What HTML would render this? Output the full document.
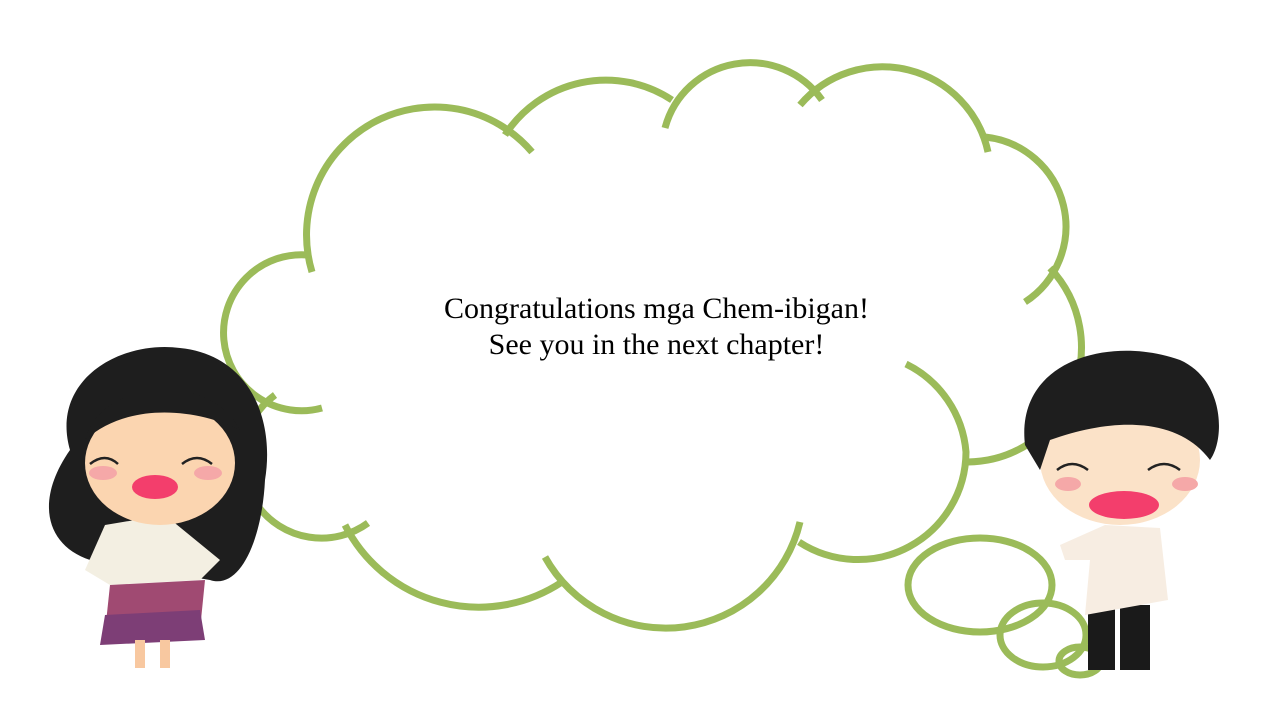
<!DOCTYPE html>
<html><head><meta charset="utf-8"><style>
html,body{margin:0;padding:0;background:#fff;width:1280px;height:720px;overflow:hidden}
.t{position:absolute;left:0;width:1313px;top:291px;text-align:center;font-family:"Liberation Serif",serif;font-size:30px;line-height:36px;color:#000}
svg{position:absolute;left:0;top:0}
</style></head><body>
<svg width="1280" height="720" viewBox="0 0 1280 720">
<g fill="none" stroke="#9BBB59" stroke-width="7" stroke-linecap="butt">
<path d="M312,272 A128,128 0 0 1 532,152"/>
<path d="M505,135 A120,120 0 0 1 672,100"/>
<path d="M665,128 A88,88 0 0 1 822,100"/>
<path d="M800,105 A108,108 0 0 1 988,152"/>
<path d="M985,137 A90,90 0 0 1 1025,302"/>
<path d="M1050,268 A115,115 0 0 1 968,462"/>
<path d="M906,364 A108,108 0 0 1 966,452 A108,108 0 0 1 799,542"/>
<path d="M800,522 A138,138 0 0 1 545,557"/>
<path d="M562,582 A150,150 0 0 1 345,525"/>
<path d="M368,523 A75,75 0 0 1 275,395"/>
<path d="M322,408 A78,78 0 1 1 308,255"/>
<ellipse cx="980" cy="585" rx="72" ry="47"/>
<ellipse cx="1043" cy="635" rx="43" ry="32"/>
<ellipse cx="1080" cy="661" rx="21" ry="14"/>
</g>
<g>
<path d="M70,450 C50,380 120,340 180,348 C250,355 275,420 265,480 C262,540 240,590 210,580 L90,560 C45,545 35,500 70,450Z" fill="#1e1e1e"/>
<path d="M85,570 L105,525 L165,515 L220,560 L200,580 L110,585Z" fill="#f3efe2"/>
<path d="M110,585 L205,580 L200,630 L105,632Z" fill="#a04a72"/>
<path d="M105,615 L200,610 L205,640 L100,645Z" fill="#7d3e76"/>
<rect x="135" y="640" width="10" height="28" fill="#f8c8a0"/><rect x="160" y="640" width="10" height="28" fill="#f8c8a0"/>
<ellipse cx="160" cy="463" rx="75" ry="62" fill="#fbd5b0"/>
<path d="M85,440 C100,380 210,370 240,430 C200,410 130,400 85,440Z" fill="#1e1e1e"/>
<ellipse cx="155" cy="487" rx="23" ry="12" fill="#f33e6c"/>
<ellipse cx="103" cy="473" rx="14" ry="7" fill="#f5a8a8"/><ellipse cx="208" cy="473" rx="14" ry="7" fill="#f5a8a8"/>
<path d="M90,464 Q105,452 118,464 M182,464 Q197,452 212,464" stroke="#222" stroke-width="2.5" fill="none"/>
</g>
<g>
<rect x="1088" y="605" width="27" height="65" fill="#1a1a1a"/><rect x="1120" y="605" width="30" height="65" fill="#1a1a1a"/>
<path d="M1060,545 L1105,525 L1160,528 L1168,600 L1085,615 L1090,560 L1065,560Z" fill="#f7ede2"/>
<ellipse cx="1120" cy="460" rx="80" ry="65" fill="#fbe2c8"/>
<path d="M1025,445 C1015,360 1110,335 1180,360 C1225,380 1225,440 1210,460 C1180,420 1120,415 1050,440 L1040,470Z" fill="#1e1e1e"/>
<ellipse cx="1124" cy="505" rx="35" ry="14" fill="#f33e6c"/>
<ellipse cx="1068" cy="484" rx="13" ry="7" fill="#f5a8a8"/><ellipse cx="1185" cy="484" rx="13" ry="7" fill="#f5a8a8"/>
<path d="M1057,470 Q1072,458 1088,470 M1148,470 Q1164,458 1180,470" stroke="#222" stroke-width="2.5" fill="none"/>
</g>
</svg>
<div class="t">Congratulations mga Chem-ibigan!<br>See you in the next chapter!</div>
</body></html>
